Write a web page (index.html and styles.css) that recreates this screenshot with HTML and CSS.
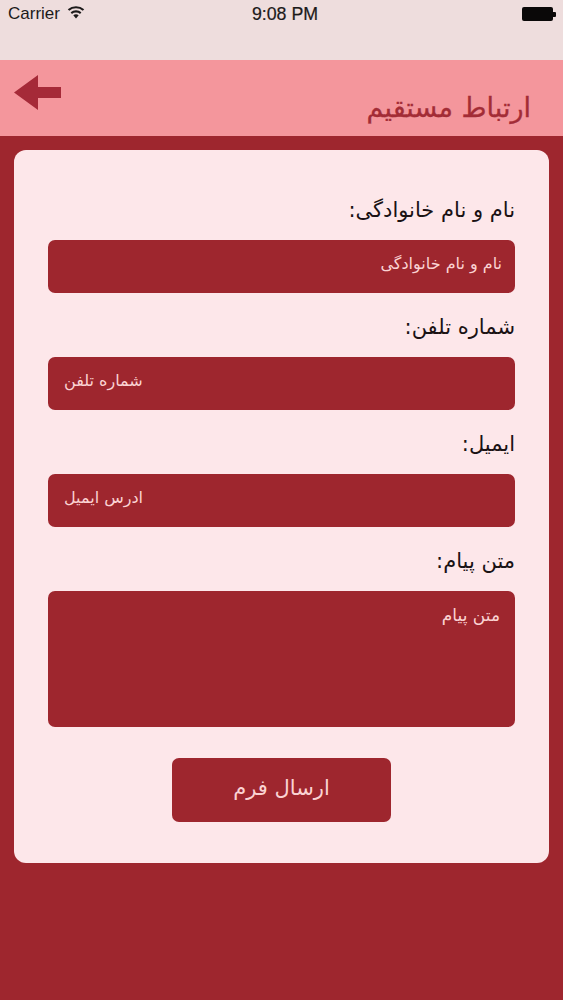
FILE: index.html
```html
<!DOCTYPE html>
<html lang="fa">
<head>
<meta charset="utf-8">
<title>ارتباط مستقیم</title>
<link rel="stylesheet" href="styles.css">
</head>
<body>
<div class="status">
  <div class="status-left">
    <span>Carrier</span>
    <svg class="wifi" width="18" height="13" viewBox="0 0 16 12" preserveAspectRatio="none"><path d="M8 11.5 5.6 8.6a3.6 3.6 0 0 1 4.8 0zM4.4 7.3 3.2 5.8a7.4 7.4 0 0 1 9.6 0l-1.2 1.5a5.4 5.4 0 0 0-7.2 0zM2 4.4.7 2.9a11 11 0 0 1 14.6 0L14 4.4a9 9 0 0 0-12 0z" fill="#1c1a1a"/></svg>
  </div>
  <div class="status-time">9:08 PM</div>
  <div class="battery"><span class="battery-body"></span><span class="battery-cap"></span></div>
</div>
<header class="nav">
  <svg class="back" width="47" height="35" viewBox="0 0 47 35"><path d="M0 17.5 24 0V12H47V23H24V35z" fill="#a52a38"/></svg>
  <div class="nav-title" dir="rtl">ارتباط مستقیم</div>
</header>
<main class="content">
  <form class="card" dir="rtl">
    <div class="label">نام و نام خانوادگی:</div>
    <div class="field">نام و نام خانوادگی</div>
    <div class="label">شماره تلفن:</div>
    <div class="field end">شماره تلفن</div>
    <div class="label">ایمیل:</div>
    <div class="field end">ادرس ایمیل</div>
    <div class="label">متن پیام:</div>
    <div class="field area">متن پیام</div>
    <div class="button-row"><div class="submit">ارسال فرم</div></div>
  </form>
</main>
</body>
</html>
```
FILE: styles.css
```css
* { box-sizing: border-box; }
html, body { margin: 0; padding: 0; }
body {
  width: 563px;
  height: 1000px;
  overflow: hidden;
  background: #9e262e;
  font-family: "DejaVu Sans", "Noto Sans", sans-serif;
}
.status {
  height: 60px;
  background: #eedddd;
  display: grid;
  grid-template-columns: 1fr auto 1fr;
  align-items: start;
  padding: 5px 7px 0 8px;
  color: #1c1a1a;
  font-family: "Liberation Sans", sans-serif;
}
.status-left {
  display: flex;
  align-items: center;
  gap: 7px;
  font-size: 17px;
  line-height: 18px;
}
.wifi { margin-top: -3px; }
.status-time {
  margin-left: 6px;
  font-size: 17.8px;
  line-height: 18px;
  -webkit-text-stroke: 0.2px #1c1a1a;
}
.battery {
  justify-self: end;
  display: flex;
  align-items: center;
  height: 18px;
}
.battery-body {
  width: 31px;
  height: 14px;
  background: #0a0808;
  border-radius: 2px;
}
.battery-cap {
  width: 3px;
  height: 5px;
  background: #0a0808;
  border-radius: 0 1px 1px 0;
}
.nav {
  height: 76px;
  background: #f4969c;
  display: flex;
  justify-content: space-between;
  align-items: flex-start;
  padding: 15px 32px 0 14px;
}
.nav-title {
  margin-top: 15px;
  font-size: 27px;
  line-height: 36px;
  color: #a32c36;
  -webkit-text-stroke: 0.3px #a32c36;
}
.content { padding: 14px 14px 0; }
.card {
  height: 713px;
  background: #fde7ea;
  border-radius: 12px;
  padding: 40px 34px 0;
}
.label {
  height: 50px;
  font-size: 21px;
  line-height: 40px;
  color: #1a1214;
}
.field {
  height: 53px;
  margin-bottom: 14px;
  padding: 10px 13px 0;
  background: #9e262e;
  border-radius: 7px;
  color: #fbd3d3;
  font-size: 16px;
  line-height: 28px;
}
.end { text-align: left; padding-left: 16px; }
.area { height: 136px; margin-bottom: 31px; font-size: 17px; padding-right: 15px; }
.button-row { display: flex; justify-content: center; }
.submit {
  width: 219px;
  height: 64px;
  background: #9e262e;
  border-radius: 7px;
  color: #fbd3d3;
  font-size: 21px;
  line-height: 60px;
  text-align: center;
}
```
